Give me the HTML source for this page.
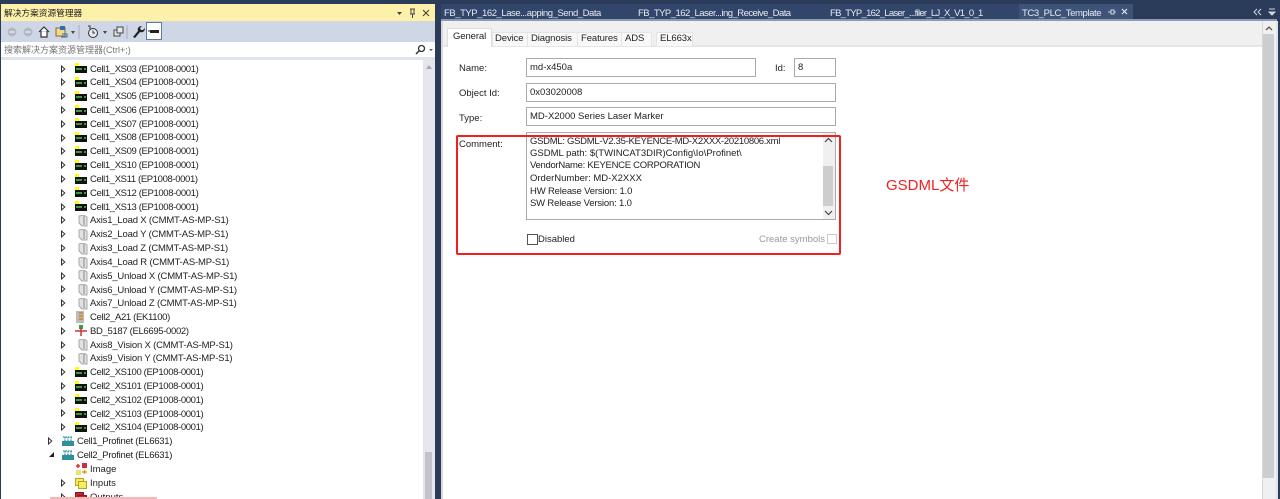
<!DOCTYPE html>
<html lang="zh"><head><meta charset="utf-8"><title>TC3</title>
<style>
html,body{margin:0;padding:0;width:1280px;height:499px;overflow:hidden;background:#2b3b5a}
body{position:relative;font:9.5px/14px "Liberation Sans","Noto Sans CJK SC",sans-serif;color:#222;filter:blur(.3px)}
div,span.a,svg{position:absolute}
.t{white-space:nowrap;position:absolute}
.r{position:absolute;white-space:nowrap;height:14px;line-height:14px;letter-spacing:-.37px;margin-top:1px}
.a1{letter-spacing:-.18px}.a2{letter-spacing:-.33px}.a3{letter-spacing:-.27px}.a4{letter-spacing:0}
.tabt{position:absolute;top:6px;color:#e6eaf2;white-space:nowrap;font-size:9.5px;line-height:15px}
.st{position:absolute;top:32px;font-size:9.5px;letter-spacing:-.1px;line-height:14px;white-space:nowrap;color:#222}
.f{position:absolute;background:#fff;border:1px solid #aaa;box-sizing:border-box;height:19px;padding:0 0 0 3px;line-height:18px;font-size:9.5px;color:#222;white-space:nowrap}
.l{position:absolute;font-size:9.5px;line-height:14px;color:#222;white-space:nowrap}
.c{position:absolute;left:530px;font-size:9.5px;line-height:13px;color:#222;white-space:nowrap}
</style></head><body>
<svg width="0" height="0" style="position:absolute"><defs>
<g id="ar"><path d="M1.500 1L4.800 4L1.500 7Z" fill="#fff" stroke="#333" stroke-width="1"/></g>
<g id="io"><rect x="0" y="0" width="4" height="3" fill="#ff0"/><rect x="0" y="3" width="12" height="7" fill="#111"/><rect x="1" y="5" width="10" height="2" fill="#3c9a44"/><rect x="7" y="4" width="2" height="5" fill="#111"/></g>
<g id="ax"><path d="M2 1L7 0L10 2V11H5L2 8Z" fill="#e2e2e2" stroke="#a8a8a8"/><path d="M7 1V10" stroke="#888"/></g>
</defs></svg>

<!-- left panel -->
<div style="left:1px;top:4px;width:434px;height:17px;background:#fdf0a8"></div>
<div class="t" style="left:4px;top:6px;font-size:8.7px;color:#222">解决方案资源管理器</div>
<svg style="left:395px;top:6px" width="40" height="14"><path d="M2 6h5l-2.500 3z" fill="#444"/><path d="M15 3h5M16 3v5M19 3v5M15 8h5M17.500 8v4" stroke="#444" fill="none"/><path d="M28 4l6 6M34 4l-6 6" stroke="#444" stroke-width="1.100"/></svg>
<div style="left:1px;top:21px;width:434px;height:21px;background:#cfd6e5"></div>
<svg style="left:4px;top:21px" width="164" height="21">
<circle cx="8" cy="11" r="4.500" fill="#b4b8c2"/><path d="M5.500 11h5" stroke="#e4e6ec" stroke-width="1.500"/>
<circle cx="24" cy="11" r="4.500" fill="#b4b8c2"/><path d="M21.500 11h5" stroke="#e4e6ec" stroke-width="1.500"/>
<path d="M35 11l5-5 5 5M37 10v6h6v-6" fill="#fff" stroke="#333" stroke-width="1.200"/>
<rect x="52" y="7" width="9" height="8" fill="#f3d98c" stroke="#8a6a20"/><rect x="56" y="5" width="5" height="4" fill="#2a6fb5"/><path d="M58 13h5v3h-6" fill="none" stroke="#2a6fb5"/>
<path d="M67 10h4l-2 3z" fill="#444"/><path d="M75 4v14" stroke="#a5adbd"/>
<path d="M84 5h2v3" stroke="#333" fill="none"/><circle cx="89" cy="12" r="4.500" fill="#e6e9f0" stroke="#333"/><path d="M89 9.500V12h2" stroke="#333" fill="none"/>
<path d="M99 10h4l-2 3z" fill="#444"/><rect x="110" y="9" width="6" height="6" fill="#e6e9f0" stroke="#444"/><rect x="113" y="6" width="6" height="6" fill="#e6e9f0" stroke="#444"/>
<path d="M123 4v14" stroke="#a5adbd"/>
<path d="M129 16l5-6c-1-3 1-5 4-5l-2 2 1 2 2 0 2-2c0 3-2 5-5 4l-5 6z" fill="#222"/>
<rect x="142.500" y="1.500" width="15" height="17" fill="#fff" stroke="#5a7aa8"/><rect x="146" y="9" width="9" height="3" fill="#222"/><path d="M144 10h3" stroke="#222"/>
</svg>
<div style="left:1px;top:42px;width:434px;height:17px;background:#fff"></div>
<div class="t" style="left:4px;top:43px;font-size:9px;color:#777">搜索解决方案资源管理器(Ctrl+;)</div>
<svg style="left:414px;top:44px" width="20" height="12"><circle cx="7.500" cy="4.500" r="3" fill="none" stroke="#333" stroke-width="1.300"/><path d="M5 7L2 10" stroke="#333" stroke-width="1.500"/><path d="M15 5h4l-2 2z" fill="#555"/></svg>
<div style="left:1px;top:59px;width:422px;height:440px;background:#fff"></div>
<div style="left:1px;top:57px;width:434px;height:3px;background:#dfe3ec"></div>
<div style="left:423px;top:60px;width:12px;height:439px;background:#e6e6ec"></div>
<div style="left:425px;top:452px;width:7px;height:47px;background:#c2c3c9"></div>
<svg style="left:425px;top:64px" width="8" height="6"><path d="M1 5h6L4 1z" fill="#a8a8b0"/></svg>

<!-- tree rows -->
<div id="tree">
<svg style="left:60px;top:65px" width="7" height="9"><use href="#ar"/></svg><svg style="left:75px;top:63px" width="13" height="11"><use href="#io"/></svg><div class="r" style="left:90px;top:62px">Cell1_XS03 (EP1008-0001)</div>
<svg style="left:60px;top:78px" width="7" height="9"><use href="#ar"/></svg><svg style="left:75px;top:77px" width="13" height="11"><use href="#io"/></svg><div class="r" style="left:90px;top:75px">Cell1_XS04 (EP1008-0001)</div>
<svg style="left:60px;top:92px" width="7" height="9"><use href="#ar"/></svg><svg style="left:75px;top:91px" width="13" height="11"><use href="#io"/></svg><div class="r" style="left:90px;top:89px">Cell1_XS05 (EP1008-0001)</div>
<svg style="left:60px;top:106px" width="7" height="9"><use href="#ar"/></svg><svg style="left:75px;top:105px" width="13" height="11"><use href="#io"/></svg><div class="r" style="left:90px;top:103px">Cell1_XS06 (EP1008-0001)</div>
<svg style="left:60px;top:120px" width="7" height="9"><use href="#ar"/></svg><svg style="left:75px;top:118px" width="13" height="11"><use href="#io"/></svg><div class="r" style="left:90px;top:117px">Cell1_XS07 (EP1008-0001)</div>
<svg style="left:60px;top:134px" width="7" height="9"><use href="#ar"/></svg><svg style="left:75px;top:132px" width="13" height="11"><use href="#io"/></svg><div class="r" style="left:90px;top:130px">Cell1_XS08 (EP1008-0001)</div>
<svg style="left:60px;top:147px" width="7" height="9"><use href="#ar"/></svg><svg style="left:75px;top:146px" width="13" height="11"><use href="#io"/></svg><div class="r" style="left:90px;top:144px">Cell1_XS09 (EP1008-0001)</div>
<svg style="left:60px;top:161px" width="7" height="9"><use href="#ar"/></svg><svg style="left:75px;top:160px" width="13" height="11"><use href="#io"/></svg><div class="r" style="left:90px;top:158px">Cell1_XS10 (EP1008-0001)</div>
<svg style="left:60px;top:175px" width="7" height="9"><use href="#ar"/></svg><svg style="left:75px;top:174px" width="13" height="11"><use href="#io"/></svg><div class="r" style="left:90px;top:172px">Cell1_XS11 (EP1008-0001)</div>
<svg style="left:60px;top:189px" width="7" height="9"><use href="#ar"/></svg><svg style="left:75px;top:187px" width="13" height="11"><use href="#io"/></svg><div class="r" style="left:90px;top:186px">Cell1_XS12 (EP1008-0001)</div>
<svg style="left:60px;top:203px" width="7" height="9"><use href="#ar"/></svg><svg style="left:75px;top:201px" width="13" height="11"><use href="#io"/></svg><div class="r" style="left:90px;top:200px">Cell1_XS13 (EP1008-0001)</div>
<svg style="left:60px;top:216px" width="7" height="9"><use href="#ar"/></svg><svg style="left:77px;top:215px" width="11" height="12"><use href="#ax"/></svg><div class="r a1" style="left:90px;top:213px">Axis1_Load X (CMMT-AS-MP-S1)</div>
<svg style="left:60px;top:230px" width="7" height="9"><use href="#ar"/></svg><svg style="left:77px;top:229px" width="11" height="12"><use href="#ax"/></svg><div class="r a1" style="left:90px;top:227px">Axis2_Load Y (CMMT-AS-MP-S1)</div>
<svg style="left:60px;top:244px" width="7" height="9"><use href="#ar"/></svg><svg style="left:77px;top:243px" width="11" height="12"><use href="#ax"/></svg><div class="r a1" style="left:90px;top:241px">Axis3_Load Z (CMMT-AS-MP-S1)</div>
<svg style="left:60px;top:258px" width="7" height="9"><use href="#ar"/></svg><svg style="left:77px;top:257px" width="11" height="12"><use href="#ax"/></svg><div class="r a1" style="left:90px;top:255px">Axis4_Load R (CMMT-AS-MP-S1)</div>
<svg style="left:60px;top:272px" width="7" height="9"><use href="#ar"/></svg><svg style="left:77px;top:270px" width="11" height="12"><use href="#ax"/></svg><div class="r a1" style="left:90px;top:269px">Axis5_Unload X (CMMT-AS-MP-S1)</div>
<svg style="left:60px;top:285px" width="7" height="9"><use href="#ar"/></svg><svg style="left:77px;top:284px" width="11" height="12"><use href="#ax"/></svg><div class="r a1" style="left:90px;top:283px">Axis6_Unload Y (CMMT-AS-MP-S1)</div>
<svg style="left:60px;top:299px" width="7" height="9"><use href="#ar"/></svg><svg style="left:77px;top:298px" width="11" height="12"><use href="#ax"/></svg><div class="r a1" style="left:90px;top:296px">Axis7_Unload Z (CMMT-AS-MP-S1)</div>
<svg style="left:60px;top:313px" width="7" height="9"><use href="#ar"/></svg><svg style="left:76px;top:311px" width="10" height="13"><rect width="8" height="12" fill="#bbb"/><path d="M3 2h4M3 5h4M3 8h4" stroke="#c98a20" stroke-width="1.500"/></svg><div class="r a2" style="left:90px;top:310px">Cell2_A21 (EK1100)</div>
<svg style="left:60px;top:327px" width="7" height="9"><use href="#ar"/></svg><svg style="left:75px;top:325px" width="13" height="12"><rect x="4" y="0" width="4" height="4" fill="#3a9a4a"/><path d="M0 6h12M6 3v8" stroke="#c33" stroke-width="1.500"/></svg><div class="r a2" style="left:90px;top:324px">BD_5187 (EL6695-0002)</div>
<svg style="left:60px;top:341px" width="7" height="9"><use href="#ar"/></svg><svg style="left:77px;top:339px" width="11" height="12"><use href="#ax"/></svg><div class="r a1" style="left:90px;top:338px">Axis8_Vision X (CMMT-AS-MP-S1)</div>
<svg style="left:60px;top:354px" width="7" height="9"><use href="#ar"/></svg><svg style="left:77px;top:353px" width="11" height="12"><use href="#ax"/></svg><div class="r a1" style="left:90px;top:351px">Axis9_Vision Y (CMMT-AS-MP-S1)</div>
<svg style="left:60px;top:368px" width="7" height="9"><use href="#ar"/></svg><svg style="left:75px;top:367px" width="13" height="11"><use href="#io"/></svg><div class="r" style="left:90px;top:365px">Cell2_XS100 (EP1008-0001)</div>
<svg style="left:60px;top:382px" width="7" height="9"><use href="#ar"/></svg><svg style="left:75px;top:381px" width="13" height="11"><use href="#io"/></svg><div class="r" style="left:90px;top:379px">Cell2_XS101 (EP1008-0001)</div>
<svg style="left:60px;top:396px" width="7" height="9"><use href="#ar"/></svg><svg style="left:75px;top:394px" width="13" height="11"><use href="#io"/></svg><div class="r" style="left:90px;top:393px">Cell2_XS102 (EP1008-0001)</div>
<svg style="left:60px;top:409px" width="7" height="9"><use href="#ar"/></svg><svg style="left:75px;top:408px" width="13" height="11"><use href="#io"/></svg><div class="r" style="left:90px;top:407px">Cell2_XS103 (EP1008-0001)</div>
<svg style="left:60px;top:423px" width="7" height="9"><use href="#ar"/></svg><svg style="left:75px;top:422px" width="13" height="11"><use href="#io"/></svg><div class="r" style="left:90px;top:420px">Cell2_XS104 (EP1008-0001)</div>
<svg style="left:47px;top:437px" width="7" height="9"><use href="#ar"/></svg><svg style="left:62px;top:436px" width="13" height="11"><rect x="0" y="5" width="12" height="5" fill="#2f8f9a"/><path d="M1 1h10M3 1v5M6 1v5M9 1v5" stroke="#2f8f9a" stroke-width="1.300" stroke-dasharray="1.500 1"/></svg><div class="r a3" style="left:77px;top:434px">Cell1_Profinet (EL6631)</div>
<svg style="left:48px;top:451px" width="7" height="7"><path d="M6 1V6H1Z" fill="#222"/></svg><svg style="left:62px;top:450px" width="13" height="11"><rect x="0" y="5" width="12" height="5" fill="#2f8f9a"/><path d="M1 1h10M3 1v5M6 1v5M9 1v5" stroke="#2f8f9a" stroke-width="1.300" stroke-dasharray="1.500 1"/></svg><div class="r a3" style="left:77px;top:448px">Cell2_Profinet (EL6631)</div>
<svg style="left:75px;top:463px" width="13" height="12"><path d="M1 3h4M3 1v4" stroke="#d33" stroke-width="1.500"/><rect x="7" y="0" width="5" height="5" fill="#c8323c"/><rect x="1" y="7" width="5" height="5" fill="#f0e070"/><path d="M7 9h5M9.500 7v4" stroke="#e0a020" stroke-width="1.500"/></svg><div class="r a4" style="left:90px;top:462px">Image</div>
<svg style="left:60px;top:479px" width="7" height="9"><use href="#ar"/></svg><svg style="left:75px;top:478px" width="13" height="11"><rect x=".5" y=".5" width="8" height="7" fill="#f5ee60" stroke="#b5a520"/><rect x="3.500" y="3.500" width="8" height="7" fill="#f5ee60" stroke="#b5a520"/></svg><div class="r a4" style="left:90px;top:476px">Inputs</div>
<svg style="left:60px;top:493px" width="7" height="9"><use href="#ar"/></svg><svg style="left:75px;top:492px" width="13" height="11"><rect x=".5" y=".5" width="8" height="7" fill="#c8202c" stroke="#8a1820"/><rect x="3.500" y="3.500" width="8" height="7" fill="#c8202c" stroke="#8a1820"/></svg><div class="r a4" style="left:90px;top:490px">Outputs</div>
</div>
<div style="left:50px;top:497px;width:107px;height:2px;background:#f5b8b8"></div>

<!-- right: tab bar -->
<div style="left:441px;top:4px;width:578px;height:15px;background:#31466a"></div>
<div class="tabt" style="left:444px;letter-spacing:-.45px">FB_TYP_162_Lase...apping_Send_Data</div>
<div class="tabt" style="left:638px;letter-spacing:-.53px">FB_TYP_162_Laser...ing_Receive_Data</div>
<div class="tabt" style="left:830px;letter-spacing:-.73px">FB_TYP_162_Laser_...filer_LJ_X_V1_0_1</div>
<div style="left:1019px;top:4px;width:114px;height:15px;background:#3d5478"></div>
<div class="tabt" style="left:1022px;letter-spacing:-.4px">TC3_PLC_Template</div>
<svg style="left:1106px;top:6px" width="26" height="12"><path d="M2 6h3M5 4h3v4H5zM8 6h2" stroke="#cfd6e5" fill="none"/><path d="M16 3l5 5M21 3l-5 5" stroke="#dfe4ee" stroke-width="1.200"/></svg>
<svg style="left:1252px;top:8px" width="26" height="10"><path d="M5 1L2 4l3 3M9 1L6 4l3 3" stroke="#cfd6e5" fill="none"/><path d="M17 1h6M17 4h6l-3 3z" stroke="#cfd6e5" fill="#cfd6e5"/></svg>
<div style="left:441px;top:19px;width:836px;height:2px;background:#8c9ab4"></div>

<!-- right: page -->
<div style="left:442px;top:21px;width:820px;height:25px;background:#f0f0f0"></div>
<div style="left:442px;top:45px;width:820px;height:2px;background:#e6e6e6"></div>
<div style="left:443px;top:47px;width:819px;height:452px;background:#fff"></div>
<div style="left:441px;top:21px;width:2px;height:478px;background:#d8d8d8"></div>
<div style="left:1262px;top:21px;width:14px;height:478px;background:#f0f0f0;border-left:1px solid #d8d8d8;box-sizing:border-box"></div>
<div style="left:1263px;top:34px;width:11px;height:444px;background:#cdcdcd"></div>
<svg style="left:1265px;top:26px" width="8" height="6"><path d="M1 4l3-3 3 3" stroke="#555" fill="none" stroke-width="1.300"/></svg>
<div style="left:1276px;top:21px;width:2px;height:478px;background:#dfe3ec"></div>

<!-- property tabs -->
<div style="left:447px;top:28px;width:45px;height:19px;background:#fff;border:1px solid #ddd;border-bottom:0;box-sizing:border-box"></div>
<div style="left:492px;top:32px;width:160px;height:14px;background:#f8f8f8;border:1px solid #e4e4e4;border-bottom:0;box-sizing:border-box"></div>
<div style="left:527px;top:32px;width:1px;height:14px;background:#e4e4e4"></div>
<div style="left:577px;top:32px;width:1px;height:14px;background:#e4e4e4"></div>
<div style="left:621px;top:32px;width:1px;height:14px;background:#e4e4e4"></div>
<div style="left:656px;top:32px;width:37px;height:14px;background:#f8f8f8;border:1px solid #e4e4e4;border-bottom:0;box-sizing:border-box"></div>
<div class="st" style="left:453px;top:30px">General</div>
<div class="st" style="left:495px">Device</div>
<div class="st" style="left:531px">Diagnosis</div>
<div class="st" style="left:581px">Features</div>
<div class="st" style="left:625px">ADS</div>
<div class="st" style="left:660px">EL663x</div>

<!-- form -->
<div class="l" style="left:459px;top:62px">Name:</div>
<div class="f" style="left:526px;top:58px;width:230px">md-x450a</div>
<div class="l" style="left:775px;top:62px">Id:</div>
<div class="f" style="left:794px;top:58px;width:42px">8</div>
<div class="l" style="left:459px;top:87px">Object Id:</div>
<div class="f" style="left:526px;top:83px;width:310px">0x03020008</div>
<div class="l" style="left:459px;top:112px">Type:</div>
<div class="f" style="left:526px;top:107px;width:310px">MD-X2000 Series Laser Marker</div>
<div class="l" style="left:459px;top:138px">Comment:</div>
<div style="left:526px;top:132px;width:310px;height:88px;background:#fff;border:1px solid #aaa;box-sizing:border-box"></div>
<div style="left:823px;top:133px;width:12px;height:86px;background:#f0f0f0"></div>
<div style="left:823px;top:166px;width:10px;height:40px;background:#cdcdcd"></div>
<svg style="left:824px;top:137px" width="9" height="6"><path d="M1 5l3.500-3.500L8 5" stroke="#444" fill="none" stroke-width="1.200"/></svg>
<svg style="left:824px;top:210px" width="9" height="6"><path d="M1 1l3.500 3.500L8 1" stroke="#444" fill="none" stroke-width="1.200"/></svg>
<div class="c" style="top:135px;letter-spacing:-.29px">GSDML: GSDML-V2.35-KEYENCE-MD-X2XXX-20210806.xml</div>
<div class="c" style="top:147px">GSDML path: $(TWINCAT3DIR)Config\Io\Profinet\</div>
<div class="c" style="top:159px;letter-spacing:-.28px">VendorName: KEYENCE CORPORATION</div>
<div class="c" style="top:172px">OrderNumber: MD-X2XXX</div>
<div class="c" style="top:185px;letter-spacing:-.17px">HW Release Version: 1.0</div>
<div class="c" style="top:197px;letter-spacing:-.17px">SW Release Version: 1.0</div>
<div style="left:527px;top:234px;width:9px;height:9px;background:#fff;border:1px solid #555"></div>
<div class="l" style="left:538px;top:233px">Disabled</div>
<div class="l" style="left:759px;top:233px;color:#999">Create symbols</div>
<div style="left:827px;top:234px;width:8px;height:8px;background:#fff;border:1px solid #ccc"></div>

<!-- red annotation -->
<div style="left:456px;top:135px;width:385px;height:120px;border:2px solid #f02020;border-radius:2px;box-sizing:border-box"></div>
<div class="t" style="left:886px;top:177px;font-size:15px;line-height:18px;color:#f02020">GSDML文件</div>
</body></html>
